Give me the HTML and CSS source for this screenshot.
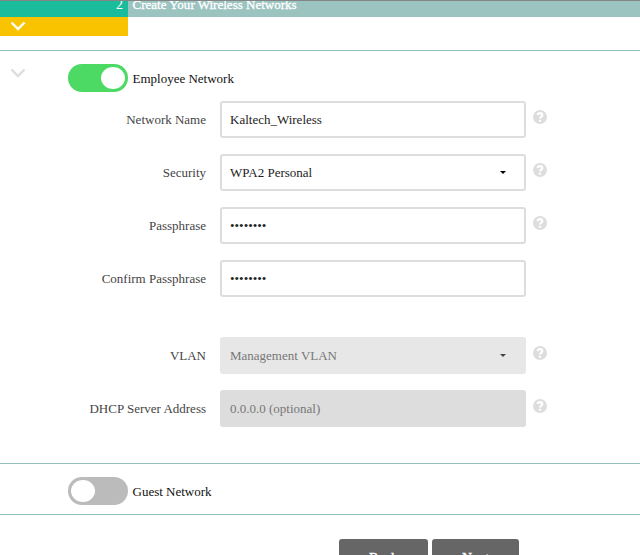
FILE: index.html
```html
<!DOCTYPE html>
<html lang="en">
<head>
<meta charset="utf-8">
<title>Create Your Wireless Networks</title>
<link rel="stylesheet" href="styles.css">
</head>
<body>
<header class="step"><div class="step-num">2</div><div class="step-title">Create Your Wireless Networks</div></header>
<div class="progress"><svg class="chevron" viewBox="0 0 16 10"><path d="M1.500 1.500 8 8l6.500-6.500"/></svg></div>
<main>
<section class="employee">
  <div class="net-head">
    <svg class="chevron muted" viewBox="0 0 16 10"><path d="M1.500 1.500 8 8l6.500-6.500"/></svg>
    <div class="toggle on"><i></i></div><span class="net-name">Employee Network</span>
  </div>
  <div class="row"><label>Network Name</label><div class="field"><span>Kaltech_Wireless</span></div><svg class="help" viewBox="0 0 14 14"><circle cx="7" cy="7" r="7"/><path d="M4.700 5.200C4.900 2.500 9.300 2.600 9.300 5.200 9.300 6.900 7 6.800 7 8.500M7 9.700v2"/></svg></div>
  <div class="row"><label>Security</label><div class="field select"><span>WPA2 Personal</span><i class="caret"></i></div><svg class="help" viewBox="0 0 14 14"><circle cx="7" cy="7" r="7"/><path d="M4.700 5.200C4.900 2.500 9.300 2.600 9.300 5.200 9.300 6.900 7 6.800 7 8.500M7 9.700v2"/></svg></div>
  <div class="row"><label>Passphrase</label><div class="field"><span class="dots">••••••••</span></div><svg class="help" viewBox="0 0 14 14"><circle cx="7" cy="7" r="7"/><path d="M4.700 5.200C4.900 2.500 9.300 2.600 9.300 5.200 9.300 6.900 7 6.800 7 8.500M7 9.700v2"/></svg></div>
  <div class="row"><label>Confirm Passphrase</label><div class="field"><span class="dots">••••••••</span></div></div>
  <div class="row vlan"><label>VLAN</label><div class="field select disabled"><span>Management VLAN</span><i class="caret"></i></div><svg class="help" viewBox="0 0 14 14"><circle cx="7" cy="7" r="7"/><path d="M4.700 5.200C4.900 2.500 9.300 2.600 9.300 5.200 9.300 6.900 7 6.800 7 8.500M7 9.700v2"/></svg></div>
  <div class="row"><label>DHCP Server Address</label><div class="field readonly"><span>0.0.0.0 (optional)</span></div><svg class="help" viewBox="0 0 14 14"><circle cx="7" cy="7" r="7"/><path d="M4.700 5.200C4.900 2.500 9.300 2.600 9.300 5.200 9.300 6.900 7 6.800 7 8.500M7 9.700v2"/></svg></div>
</section>
<section class="guest"><div class="toggle"><i></i></div><span class="net-name">Guest Network</span></section>
</main>
<footer class="actions"><div class="btn back">Back</div><div class="btn next">Next</div></footer>
</body>
</html>
```
FILE: styles.css
```css
* { box-sizing: border-box; }
html { overflow: hidden; }
body { margin: 0; height: 555px; overflow: hidden; background: #fff; font: 13px/16px "Liberation Serif", "Times New Roman", serif; color: #111; }
.step { display: flex; height: 17px; border-top: 1px solid #858585; overflow: hidden; background: #9bc4c1; color: #fff; }
.step-num { width: 128px; height: 16px; padding-right: 5px; background: #1abc9c; text-align: right; margin-right: 4.5px; line-height: 8px; font-size: 14px; }
.step-title { line-height: 8px; letter-spacing: .01px; -webkit-text-stroke: .3px #fff; }
.progress { width: 128px; height: 19px; padding: 4px 0 0 10px; background: #f9c300; }
.chevron { display: block; width: 16px; height: 10px; fill: none; stroke: #fff; stroke-width: 2.4; }
.chevron.muted { stroke: #ddd; margin: 4px 42px 0 10px; }
.employee { height: 413px; margin-top: 14px; border-top: 1px solid #91c2bf; padding-top: 13px; }
.net-head { display: flex; height: 37px; align-items: flex-start; }
.toggle { flex: none; width: 60px; height: 28px; padding: 3px; border-radius: 14px; background: #bbb; }
.toggle i { display: block; width: 24px; height: 22px; border-radius: 50%; background: #fff; }
.toggle.on { background: #4cd964; }
.toggle.on i { margin-left: 30px; }
.net-name { margin: 7px 0 0 4.5px; }
.row { display: flex; height: 37px; margin-bottom: 16px; }
.row.vlan { margin-top: 40px; }
label { width: 206px; margin-right: 14px; padding-top: 11px; text-align: right; color: #444; }
.field { display: flex; align-items: center; justify-content: space-between; width: 306px; padding: 1px 18px 0 8px; border: 2px solid #ddd; border-radius: 3px; color: #222; }
.select { background: #fff; }
.disabled { background: #e7e7e7; border-color: #e7e7e7; color: #777; }
.readonly { background: #ddd; color: #777; }
.caret { border: 3px solid transparent; border-top-color: #000; border-bottom: 0; margin-bottom: 1px; }
.disabled .caret { border-top-color: #444; }
.help { width: 14px; height: 14px; margin: 9px 0 0 7px; fill: #ddd; }
.help path { fill: none; stroke: #fff; stroke-width: 2.2; }
.guest { display: flex; height: 52px; border: solid #91c2bf; border-width: 1px 0; padding: 13px 0 0 68px; }
.actions { display: flex; gap: 4px; margin: 24px 0 0 339px; }
.btn { height: 37px; padding-top: 12px; border-radius: 3px 3px 0 0; background: #666; color: #fff; font-size: 14px; text-align: center; -webkit-text-stroke: .3px #fff; }
.back { width: 89px; }
.next { width: 87px; }
```
